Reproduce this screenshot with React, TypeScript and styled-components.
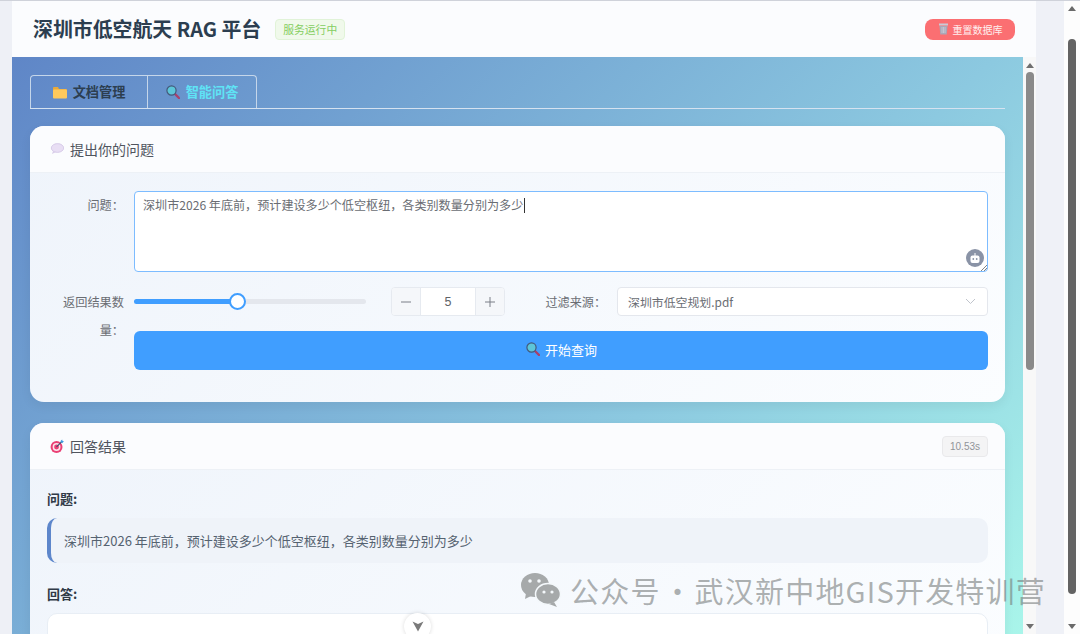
import React from 'react';
import styled, { createGlobalStyle } from 'styled-components';

const Global = createGlobalStyle`
  html, body { margin: 0; padding: 0; width: 1080px; height: 634px; overflow: hidden; background: #eff1f7; }
  * { box-sizing: border-box; }
  body { font-family: "Noto Sans CJK SC", "Liberation Sans", sans-serif; }
`;
const Page = styled.div`position: relative; display: flex; width: 1080px; height: 634px; overflow: hidden; background: #eff1f7; border-top: 1px solid #cfd2da;`;
const Strip = styled.div`width: 12px; flex: none; background: #eef0f6;`;
const Main = styled.div`width: 1024px; flex: none; display: flex; flex-direction: column;`;
const Gutter = styled.div`width: 28px; flex: none; background: #eff1f7;`;
const Header = styled.header`height: 56px; flex: none; display: flex; align-items: center; padding: 0 21px; background: #fbfcfe;`;
const Title = styled.h1`margin: 0; font-size: 19.9px; font-weight: 700; color: #2c3e50; line-height: 28px;`;
const Status = styled.span`margin-left: 14px; height: 21px; width: 70px; display: flex; align-items: center; justify-content: center; font-size: 10.8px; color: #85ce61; background: #f0f9eb; border: 1px solid #e1f3d8; border-radius: 4px;`;
const Reset = styled.button`margin-left: auto; height: 21px; width: 90px; padding: 0; border: 0; border-radius: 8px; display: flex; align-items: center; justify-content: center; gap: 4px; background: #fb6f72; color: #fff0f0; font: 10px "Noto Sans CJK SC", sans-serif;`;
const Body = styled.div`flex: 1; display: flex; min-height: 0;`;
const Content = styled.main`flex: 1; padding: 18px 18px 0; overflow: hidden; background: linear-gradient(135deg, #5f86c7 0%, #8cc9e0 62%, #a9f5ea 100%);`;
const Tabs = styled.nav`display: flex; height: 34px; border-bottom: 1px solid #d5e2f0;`;
const Tab = styled.div<{ $active?: boolean; $w: number; $last?: boolean }>`
  width: ${p => p.$w}px; height: 33px; padding-bottom: 2px; display: flex; align-items: center; justify-content: center; gap: 5px;
  font-size: 13.2px; font-weight: 700; color: ${p => (p.$active ? '#5fe3f5' : '#2c3e50')};
  border: 1px solid #c5d6ea; border-bottom: 0; border-left-width: ${p => (p.$last ? 0 : 1)}px;
  border-radius: ${p => (p.$last ? '0 4px 0 0' : '4px 0 0 0')};
`;
const TabIcon = styled.span`display: flex; margin-right: 1px; padding-top: 2px;`;
const Card = styled.section<{ $mt: number }>`margin-top: ${p => p.$mt}px; border-radius: 14px; overflow: hidden; background: linear-gradient(135deg, #eff4fb 0%, #fbfdff 100%); box-shadow: 0 4px 12px rgba(0,0,0,.06);`;
const CardHead = styled.div`height: 47px; display: flex; align-items: center; gap: 6px; padding: 0 17px 0 20px; background: #fbfcfe; border-bottom: 1px solid #edf1f6; font-size: 14px; color: #50555e;`;
const Time = styled.span`margin-left: auto; height: 21px; width: 46px; display: flex; align-items: center; justify-content: center; font: 10px "Liberation Sans", sans-serif; color: #909399; background: #f4f4f5; border: 1px solid #e9e9eb; border-radius: 4px;`;
const Form = styled.div`padding: 18px 17px 32px; display: grid; grid-template-columns: 77px 1fr; column-gap: 10px;`;
const Label = styled.label<{ $mt?: number }>`margin-top: ${p => p.$mt ?? 0}px; font-size: 12.2px; line-height: 28px; text-align: right; color: #6a6d73;`;
const Question = styled.div`position: relative; height: 81px; padding: 0 8px; font-size: 12.1px; line-height: 26px; color: #6a6d73; background: #fff; border: 1.5px solid #7dbcff; border-radius: 4px;`;
const Caret = styled.span`display: inline-block; width: 1px; height: 15px; margin-left: 1px; vertical-align: -3px; background: #333;`;
const Bot = styled.span`position: absolute; right: 3px; bottom: 4px; width: 18px; height: 18px; border-radius: 50%; background: #8a93a6; display: flex; align-items: center; justify-content: center;`;
const Grip = styled.svg`position: absolute; right: 0; bottom: 0;`;
const ControlCol = styled.div`margin-top: 15px; display: flex; flex-direction: column; gap: 15px;`;
const Controls = styled.div`display: flex; align-items: center; height: 29px;`;
const Slider = styled.div`position: relative; width: 232px; height: 5px; border-radius: 3px; background: #e4e7ed;`;
const Fill = styled.div`height: 100%; border-radius: 3px; background: #409eff;`;
const Thumb = styled.span`position: absolute; top: -6px; left: 95px; width: 17px; height: 17px; border-radius: 50%; background: #fff; border: 2px solid #409eff;`;
const Stepper = styled.div`margin-left: 25px; width: 114px; height: 29px; display: flex; border: 1px solid #e6eaf0; border-radius: 4px; background: #fff; overflow: hidden;`;
const StepBtn = styled.span`width: 28px; display: flex; align-items: center; justify-content: center; background: #f5f7fa; color: #606266;`;
const StepVal = styled.span`flex: 1; border-left: 1px solid #e6eaf0; border-right: 1px solid #e6eaf0; display: flex; align-items: center; justify-content: center; font: 12.5px "Liberation Sans", sans-serif; color: #606266;`;
const FilterLabel = styled.span`width: 101px; padding-right: 0; text-align: right; font-size: 12.1px; color: #6a6d73;`;
const Select = styled.div`margin-left: 11px; flex: 1; height: 29px; padding: 0 11px 0 10px; display: flex; align-items: center; justify-content: space-between; font-size: 11.9px; color: #6a6d73; background: #fff; border: 1px solid #e4e7ed; border-radius: 4px;`;
const Submit = styled.button`height: 39px; width: 100%; border: 0; padding: 0 0 3px 1px; border-radius: 6px; display: flex; align-items: center; justify-content: center; gap: 5px; background: #409eff; color: #fff; font: 13px "Noto Sans CJK SC", sans-serif;`;
const Result = styled.div`padding: 20px 17px 0;`;
const Sub = styled.h3`margin: 0; font-size: 13px; line-height: 18px; font-weight: 700; color: #303a47;`;
const Quote = styled.div`margin: 10px 0 22px; height: 45px; padding: 0 13px; display: flex; align-items: center; font-size: 13px; color: #556270; background: #eff3f9; border-left: 4px solid #5d86cb; border-radius: 10px;`;
const Answer = styled.div`margin-top: 10px; height: 60px; background: #fff; border: 1px solid #e8eef5; border-radius: 10px;`;
const Scroll = styled.div<{ $w: number; $bg: string }>`position: relative; width: ${p => p.$w}px; flex: none; background: ${p => p.$bg};`;
const ScrollThumb = styled.div<{ $top: number; $h: number; $c: string }>`position: absolute; top: ${p => p.$top}px; left: 50%; transform: translateX(-50%); width: 8px; height: ${p => p.$h}px; border-radius: 4px; background: ${p => p.$c};`;
const Arrow = styled.span<{ $down?: boolean; $c: string; $pos: number }>`position: absolute; left: 50%; transform: translateX(-50%); ${p => (p.$down ? 'bottom' : 'top')}: ${p => p.$pos}px; width: 0; height: 0; border-left: 4px solid transparent; border-right: 4px solid transparent; ${p => (p.$down ? 'border-top' : 'border-bottom')}: 5px solid ${p => p.$c};`;
const Watermark = styled.div`position: absolute; left: 520px; top: 571px; display: flex; align-items: center; gap: 8px; font-size: 29px; letter-spacing: 1.2px; line-height: 36px; color: rgba(120,125,125,.6); white-space: nowrap; pointer-events: none;`;
const Dot = styled.span`display: inline-block; width: 34px; text-align: center; letter-spacing: 0;`;
const Fold = styled.span`position: absolute; left: 404px; top: 612px; width: 27px; height: 27px; border-radius: 50%; background: #fff; box-shadow: 0 0 4px rgba(0,0,0,.14); display: flex; justify-content: center; padding-top: 8px;`;

const Folder = () => (<svg width="14" height="13" viewBox="0 0 14 13"><path d="M0 2a1 1 0 0 1 1-1h4l1 2h7a1 1 0 0 1 1 1v1H0z" fill="#e8a93a"/><rect y="3.5" width="14" height="9" rx="1" fill="#ffc95c"/></svg>);
const Lens = ({ s = 14 }: { s?: number }) => (<svg width={s} height={s} viewBox="0 0 14 14"><path d="M8.5 8.5L13 13" stroke="#a8416b" strokeWidth="2.4" strokeLinecap="round"/><circle cx="5.5" cy="5.5" r="4.6" fill="#5cc6d8" stroke="#44597a" strokeWidth="1.2"/></svg>);
const Bubble = () => (<svg width="14" height="12" viewBox="0 0 14 12"><ellipse cx="7.5" cy="5" rx="6.2" ry="4.4" fill="#e8def4" stroke="#cdbfe3" strokeWidth=".7"/><path d="M3 8l-1 3 4-2z" fill="#d9cdea"/></svg>);
const Target = () => (<svg width="14" height="15" viewBox="0 0 15 15"><circle cx="7" cy="8" r="6.4" fill="#ea3f74"/><circle cx="7" cy="8" r="4.2" fill="#fbe3ea"/><circle cx="7" cy="8" r="2.6" fill="#ea3f74"/><path d="M7 8l6-6" stroke="#35506e" strokeWidth="1.2"/><path d="M11 2l2-2 .5 1.5L15 2l-2 2z" fill="#3f9ae0"/></svg>);
const Trash = () => (<svg width="11" height="12" viewBox="0 0 11 12"><rect x="1" y="0.5" width="9" height="2" fill="#c9ccd6"/><path d="M1.5 3h8l-.8 8.5H2.300z" fill="#a9a8b8"/><path d="M4 4v6M5.500 4v6M7 4v6" stroke="#d8d9e2" strokeWidth=".6"/></svg>);

export default function App() {
  return (
    <Page>
      <Global />
      <Strip />
      <Main>
        <Header>
          <Title>深圳市低空航天 RAG 平台</Title>
          <Status>服务运行中</Status>
          <Reset><Trash />重置数据库</Reset>
        </Header>
        <Body>
          <Content>
            <Tabs>
              <Tab $w={118}><TabIcon><Folder /></TabIcon>文档管理</Tab>
              <Tab $w={109} $active $last><TabIcon><Lens /></TabIcon>智能问答</Tab>
            </Tabs>
            <Card $mt={17}>
              <CardHead><Bubble />提出你的问题</CardHead>
              <Form>
                <Label>问题：</Label>
                <Question>
                  深圳市2026 年底前，预计建设多少个低空枢纽，各类别数量分别为多少<Caret />
                  <Bot>
                    <svg width="12" height="11" viewBox="0 0 12 11"><rect x="1.500" y="2.500" width="9" height="7.500" rx="2" fill="#fff"/><path d="M6 0v3" stroke="#fff"/><circle cx="4.300" cy="6" r=".9" fill="#8a93a6"/><circle cx="7.700" cy="6" r=".9" fill="#8a93a6"/></svg>
                  </Bot>
                  <Grip width="7" height="7" viewBox="0 0 7 7"><path d="M1 7l6-6M4 7l3-3" stroke="#666" strokeWidth=".8"/></Grip>
                </Question>
                <Label $mt={16}>返回结果数量：</Label>
                <ControlCol>
                  <Controls>
                    <Slider>
                      <Fill style={{ width: '44%' }} />
                      <Thumb />
                    </Slider>
                    <Stepper>
                      <StepBtn><svg width="12" height="12" viewBox="0 0 12 12"><path d="M1 6h10" stroke="#7b7f87"/></svg></StepBtn>
                      <StepVal>5</StepVal>
                      <StepBtn><svg width="12" height="12" viewBox="0 0 12 12"><path d="M1 6h10M6 1v10" stroke="#7b7f87"/></svg></StepBtn>
                    </Stepper>
                    <FilterLabel>过滤来源：</FilterLabel>
                    <Select>
                      深圳市低空规划.pdf
                      <svg width="11" height="7" viewBox="0 0 11 7"><path d="M1 1l4.500 4.500L10 1" fill="none" stroke="#c0c4cc"/></svg>
                    </Select>
                  </Controls>
                  <Submit><Lens />开始查询</Submit>
                </ControlCol>
              </Form>
            </Card>
            <Card $mt={21}>
              <CardHead><Target />回答结果<Time>10.53s</Time></CardHead>
              <Result>
                <Sub>问题:</Sub>
                <Quote>深圳市2026 年底前，预计建设多少个低空枢纽，各类别数量分别为多少</Quote>
                <Sub>回答:</Sub>
                <Answer />
              </Result>
            </Card>
          </Content>
          <Scroll $w={13} $bg="#f8f8f8">
            <Arrow $c="#6f6f6f" $pos={6} />
            <ScrollThumb $top={15} $h={298} $c="#8a8a8a" />
            <Arrow $down $c="#6f6f6f" $pos={5} />
          </Scroll>
        </Body>
      </Main>
      <Gutter />
      <Scroll $w={16} $bg="#fdfdfd">
        <Arrow $c="#6a6a6a" $pos={5} />
        <ScrollThumb $top={38} $h={555} $c="#636363" />
        <Arrow $down $c="#6a6a6a" $pos={5} />
      </Scroll>
      <Watermark>
        <svg width="42" height="36" viewBox="0 0 42 36">
          <ellipse cx="15" cy="13" rx="14" ry="12" fill="#a6a9aa"/>
          <path d="M6 21l-1 6 8-4z" fill="#a6a9aa"/>
          <ellipse cx="28" cy="22" rx="12.500" ry="10.500" fill="#a6a9aa" stroke="#f4f8fb" strokeWidth="1.500"/>
          <path d="M34 30l3 5-8-3z" fill="#a6a9aa"/>
          <circle cx="10" cy="9" r="1.800" fill="#f4f8fb"/><circle cx="19" cy="9" r="1.800" fill="#f4f8fb"/>
          <circle cx="24" cy="20" r="1.600" fill="#f4f8fb"/><circle cx="32" cy="20" r="1.600" fill="#f4f8fb"/>
        </svg>
        <span>公众号<Dot>·</Dot>武汉新中地GIS开发特训营</span>
      </Watermark>
      <Fold>
        <svg width="12" height="11" viewBox="0 0 12 11"><path d="M0.500 0.500L6 3l5.500-2.500L6 10.500z" fill="#7a7a7a"/></svg>
      </Fold>
    </Page>
  );
}
